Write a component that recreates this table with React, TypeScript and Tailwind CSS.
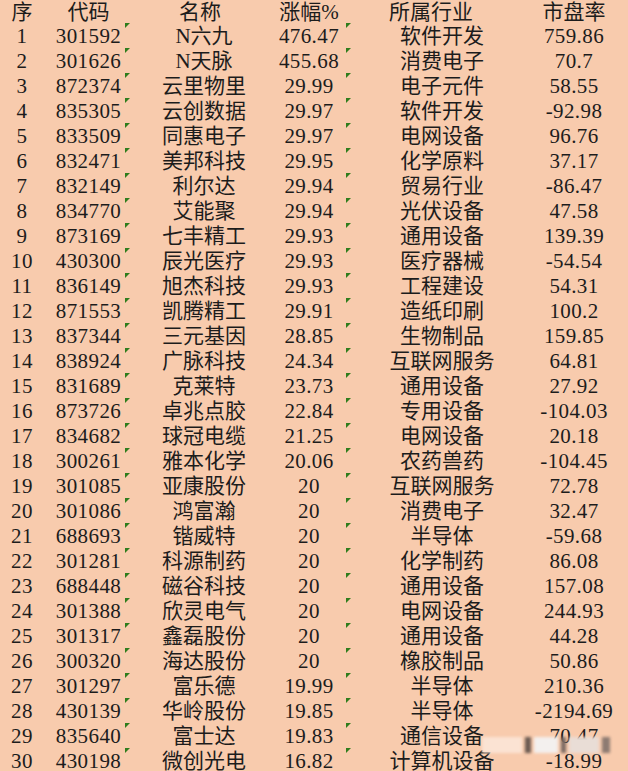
const ROWS: [string, string, string, string, string][] = [
  ['301592', 'N六九', '476.47', '软件开发', '759.86'],
  ['301626', 'N天脉', '455.68', '消费电子', '70.7'],
  ['872374', '云里物里', '29.99', '电子元件', '58.55'],
  ['835305', '云创数据', '29.97', '软件开发', '-92.98'],
  ['833509', '同惠电子', '29.97', '电网设备', '96.76'],
  ['832471', '美邦科技', '29.95', '化学原料', '37.17'],
  ['832149', '利尔达', '29.94', '贸易行业', '-86.47'],
  ['834770', '艾能聚', '29.94', '光伏设备', '47.58'],
  ['873169', '七丰精工', '29.93', '通用设备', '139.39'],
  ['430300', '辰光医疗', '29.93', '医疗器械', '-54.54'],
  ['836149', '旭杰科技', '29.93', '工程建设', '54.31'],
  ['871553', '凯腾精工', '29.91', '造纸印刷', '100.2'],
  ['837344', '三元基因', '28.85', '生物制品', '159.85'],
  ['838924', '广脉科技', '24.34', '互联网服务', '64.81'],
  ['831689', '克莱特', '23.73', '通用设备', '27.92'],
  ['873726', '卓兆点胶', '22.84', '专用设备', '-104.03'],
  ['834682', '球冠电缆', '21.25', '电网设备', '20.18'],
  ['300261', '雅本化学', '20.06', '农药兽药', '-104.45'],
  ['301085', '亚康股份', '20', '互联网服务', '72.78'],
  ['301086', '鸿富瀚', '20', '消费电子', '32.47'],
  ['688693', '锴威特', '20', '半导体', '-59.68'],
  ['301281', '科源制药', '20', '化学制药', '86.08'],
  ['688448', '磁谷科技', '20', '通用设备', '157.08'],
  ['301388', '欣灵电气', '20', '电网设备', '244.93'],
  ['301317', '鑫磊股份', '20', '通用设备', '44.28'],
  ['300320', '海达股份', '20', '橡胶制品', '50.86'],
  ['301297', '富乐德', '19.99', '半导体', '210.36'],
  ['430139', '华岭股份', '19.85', '半导体', '-2194.69'],
  ['835640', '富士达', '19.83', '通信设备', '70.47'],
  ['430198', '微创光电', '16.82', '计算机设备', '-18.99'],
]

// numbers: serif digits at half-width, like SimSun in the sheet
const num = "font-['Liberation_Serif',serif] text-[21px] tracking-[0.4px]"
const zh = "font-['Liberation_Serif','Noto_Sans_CJK_SC',serif] text-[21px]"

// green "number stored as text" corner marks
function Mark({ left }: { left: string }) {
  return (
    <span
      className={`absolute top-[-1px] ${left} w-0 h-0 border-t-[5px] border-r-[5px] border-t-[#2f7d1c] border-r-transparent`}
    />
  )
}

export default function App() {
  return (
    <div className="relative w-[628px] h-[771px] overflow-hidden bg-[#f8cbad] text-[#1c1c1c] leading-none">
      <div className="flex h-[24px] items-center">
        <div className={`w-[44px] flex justify-center whitespace-nowrap ${zh}`}>序</div>
        <div className={`w-[89px] flex justify-center whitespace-nowrap ${zh}`}>代码</div>
        <div className={`w-[142px] flex justify-center whitespace-nowrap pr-[8px] ${zh}`}>名称</div>
        <div className={`w-[68px] flex justify-center whitespace-nowrap ${zh}`}>涨幅%</div>
        <div className={`w-[198px] flex justify-center whitespace-nowrap pr-[22px] ${zh}`}>所属行业</div>
        <div className={`w-[66px] flex justify-center whitespace-nowrap ${zh}`}>市盘率</div>
      </div>
      {ROWS.map((r, i) => (
        <div key={r[0]} className="relative flex h-[25px] items-center">
          <Mark left="left-[125px]" />
          <Mark left="left-[346px]" />
          <div className={`w-[44px] flex justify-center whitespace-nowrap ${num}`}>{i + 1}</div>
          <div className={`w-[89px] flex justify-center whitespace-nowrap ${num}`}>{r[0]}</div>
          <div className={`w-[142px] flex justify-center whitespace-nowrap ${zh}`}>{r[1]}</div>
          <div className={`w-[68px] flex justify-center whitespace-nowrap ${num}`}>{r[2]}</div>
          <div className={`w-[198px] flex justify-center whitespace-nowrap ${zh}`}>{r[3]}</div>
          <div className={`w-[66px] flex justify-center whitespace-nowrap ${num}`}>{r[4]}</div>
        </div>
      ))}
      {/* blurred watermark */}
      <div className="absolute left-[482px] top-[735px] w-[130px] h-[20px] flex items-center gap-[3px] blur-[1.5px]">
        <div className="w-[40px] h-[16px] bg-[#fbe3d3]" />
        <div className="w-[6px] h-[16px] bg-[#6b5a52]" />
        <div className="w-[24px] h-[16px] bg-[#f3f0ee]" />
        <div className="w-[5px] h-[16px] bg-[#7a6a62]" />
        <div className="w-[30px] h-[16px] bg-[#e9ddd6]" />
        <div className="w-[8px] h-[16px] bg-[#8d7b72]" />
      </div>
    </div>
  )
}
